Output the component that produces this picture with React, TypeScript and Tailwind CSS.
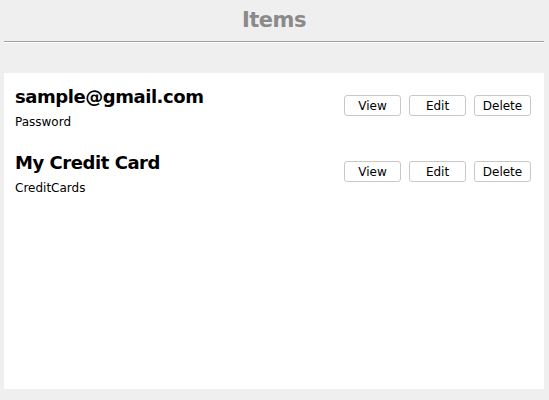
const items = [
  { name: "sample@gmail.com", type: "Password" },
  { name: "My Credit Card", type: "CreditCards" },
];

export default function App() {
  return (
    <div className="h-[400px] bg-[#efefef] pl-1 pr-[5px] pb-[11px] flex flex-col" style={{ fontFamily: '"DejaVu Sans", sans-serif' }}>
      {/* Header */}
      <h1 className="text-center text-[21px] font-bold text-[#8a8a8a] leading-[41px] tracking-tight">Items</h1>
      <div className="border-t border-[#a0a0a0] border-b border-b-white" />

      {/* List */}
      <div className="mt-[30px] flex-1 bg-white pl-[11px] pr-[13px] pt-[12px]">
        {items.map((item) => (
          <div key={item.name} className="flex items-start justify-between mb-[20px]">
            <div>
              <div className="text-[18px] font-bold text-black leading-[24px] tracking-tight">{item.name}</div>
              <div className="text-[12px] text-black leading-[18px] mt-[4px]">{item.type}</div>
            </div>
            <div className="flex gap-2 mt-[10px]">
              {["View", "Edit", "Delete"].map((b) => (
                <button
                  key={b}
                  className="w-[57px] h-[21px] bg-white border border-[#c8c8c8] rounded-[3px] text-[12px] text-black leading-none"
                >
                  {b}
                </button>
              ))}
            </div>
          </div>
        ))}
      </div>
    </div>
  );
}
